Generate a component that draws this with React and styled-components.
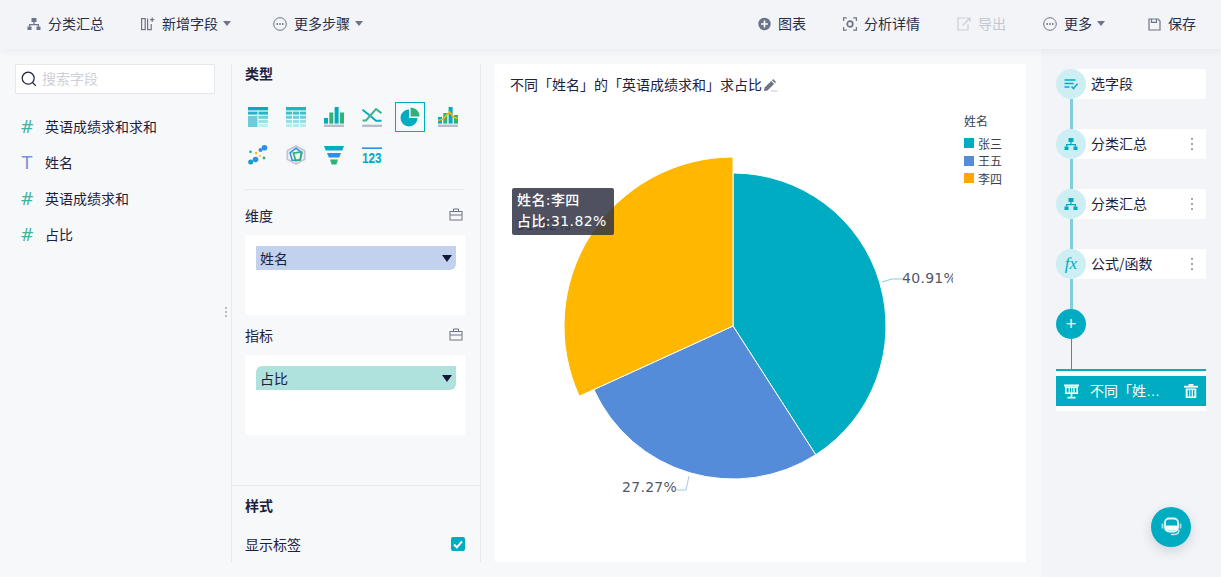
import styled, { createGlobalStyle } from 'styled-components';

const TEAL = '#00acc1';
const BLUE = '#548cd9';
const YELLOW = '#ffb700';
const GREEN = '#2db37a';
const GREY = '#b7bcca';

const GlobalStyle = createGlobalStyle`
	html, body {
		margin: 0;
		padding: 0;
		height: 100%;
		overflow: hidden;
		background: #f7f8fa;
	}
	body {
		font-family: "Noto Sans CJK SC", "Liberation Sans", sans-serif;
		font-size: 14px;
		color: #1d2140;
	}
	* {
		box-sizing: border-box;
	}
`;

/* header icons */
const TreeIcon = ({ color = '#6d7488' }) => (
	<svg width="14" height="14" viewBox="0 0 14 14" fill={color}>
		<rect x="4.5" y="1" width="5" height="4" />
		<rect x="0.5" y="9.5" width="4" height="3.5" />
		<rect x="9.5" y="9.5" width="4" height="3.5" />
		<path d="M6.4 5h1.2v2H12v2.5h-1.2V8.2H3.2v1.3H2V7h4.4z" />
	</svg>
);

const AddFieldIcon = () => (
	<svg width="14" height="14" viewBox="0 0 14 14" fill="none" stroke="#6d7488" strokeWidth="1.2">
		<rect x="0.6" y="1.6" width="3.6" height="11" />
		<path d="M6.6 1.6v11h3.6V7" />
		<path d="M11.2 0.5v4.4M9 2.7h4.4" />
	</svg>
);

const MoreIcon = () => (
	<svg width="14" height="14" viewBox="0 0 14 14" fill="none">
		<circle cx="7" cy="7" r="6.3" stroke="#6d7488" strokeWidth="1" />
		<circle cx="4.2" cy="7" r="0.9" fill="#6d7488" />
		<circle cx="7" cy="7" r="0.9" fill="#6d7488" />
		<circle cx="9.8" cy="7" r="0.9" fill="#6d7488" />
	</svg>
);

const PlusCircleIcon = () => (
	<svg width="13" height="14" viewBox="0 0 13 14">
		<circle cx="6.5" cy="7" r="6.2" fill="#6d7488" />
		<path d="M6.5 3.6v6.8M3.1 7h6.8" stroke="#fff" strokeWidth="1.6" />
	</svg>
);

const ScanIcon = () => (
	<svg width="14" height="14" viewBox="0 0 14 14" fill="none" stroke="#6d7488" strokeWidth="1.2">
		<path d="M0.6 4V0.8h3.2M10.2 0.8h3.2V4M13.4 10v3.2h-3.2M3.8 13.2H0.6V10" />
		<circle cx="7" cy="7" r="2.8" strokeWidth="1.7" />
	</svg>
);

const ExportIcon = () => (
	<svg width="14" height="14" viewBox="0 0 14 14" fill="none" stroke="#c9cdd8" strokeWidth="1.2">
		<path d="M11 7v6H1V1h7" />
		<path d="M5.5 8.5L12.5 1.5M9 1h4v4" />
	</svg>
);

const SaveIcon = () => (
	<svg width="13" height="13" viewBox="0 0 13 13" fill="none" stroke="#6d7488" strokeWidth="1.2">
		<path d="M1 1h9l2 2v9H1z" />
		<path d="M3.5 1v3.4h5V1" />
	</svg>
);

const ToolboxIcon = () => (
	<svg width="14" height="13" viewBox="0 0 14 13" fill="none" stroke="#6d7488" strokeWidth="1">
		<rect x="1" y="3.5" width="12" height="8.5" />
		<path d="M4.5 3.5V1h5v2.5M1 7h12" />
	</svg>
);

const SelectFieldIcon = () => (
	<svg width="14" height="11" viewBox="0 0 14 11" fill="none" stroke={TEAL} strokeWidth="1.4">
		<path d="M0.5 1h11M0.5 4.5h9M0.5 8h5" />
		<path d="M7.5 7.5l2 2.2 4-5" />
	</svg>
);

const BoardIcon = () => (
	<svg width="15" height="15" viewBox="0 0 15 15" fill="#fff">
		<rect x="0" y="0.5" width="15" height="2" />
		<path d="M1 2.5h13v7.5H1zM2.6 4v4.5h2V4zm3.2 0v4.5h1.2V4zm2.4 0v4.5h1.2V4zm2.4 0v4.5h1.8V4z" fillRule="evenodd" />
		<rect x="6.7" y="10" width="1.6" height="3" />
		<rect x="3.5" y="12.8" width="8" height="1.7" />
	</svg>
);

const TrashIcon = () => (
	<svg width="14" height="14" viewBox="0 0 14 14" fill="#fff">
		<rect x="0" y="1.8" width="14" height="1.8" />
		<rect x="4.5" y="0" width="5" height="1.8" />
		<path d="M1.7 4.6h10.6V14H1.7zM3.6 5.8v6.6h1.5V5.8zm2.6 0v6.6h1.5V5.8zm2.7 0v6.6h1.5V5.8z" fillRule="evenodd" />
	</svg>
);

const PenIcon = () => (
	<svg width="15" height="14" viewBox="0 0 15 14">
		<path d="M1 13l.6-3.4 6.6-6.6 2.9 2.9-6.6 6.6z" fill="#6d7488" />
		<path d="M9 2.2l1.2-1.2 2.9 2.9-1.2 1.2z" fill="#6d7488" />
		<path d="M8 13h6.5" stroke="#c9cdd8" strokeWidth="1.2" />
	</svg>
);

const HeadsetIcon = () => (
	<svg width="21" height="20" viewBox="0 0 21 20" fill="none">
		<rect x="4" y="1.5" width="13" height="13" rx="4" stroke="#e6f8fa" strokeWidth="1.8" />
		<rect x="4.5" y="8.5" width="12" height="5" rx="1.5" fill="#fff" />
		<path d="M1.5 6.5v5M19.5 6.5v5" stroke="#a8e2e9" strokeWidth="1.8" />
		<path d="M18 13c0 3-2 4.5-5 4.5H10" stroke="#c6eef2" strokeWidth="1.4" />
	</svg>
);

/* chart type icons, 20x20 */
const TableIcon = () => (
	<svg width="20" height="20" viewBox="0 0 20 20">
		<rect width="20" height="3.4" fill={TEAL} />
		<rect y="4.6" width="9.5" height="3" fill="#22b5c8" />
		<rect x="10.5" y="4.6" width="9.5" height="3" fill="#22b5c8" />
		<rect y="8.8" width="9.5" height="11.2" fill="#6bcdd9" />
		<rect x="10.5" y="8.8" width="9.5" height="3" fill="#6bcdd9" />
		<rect x="10.5" y="13" width="9.5" height="3" fill="#9ee0e8" />
		<rect x="10.5" y="17" width="9.5" height="3" fill="#c4edf1" />
	</svg>
);

const PivotIcon = () => (
	<svg width="20" height="20" viewBox="0 0 20 20">
		<rect width="20" height="3.4" fill="#22b5c8" />
		{[
			[4.6, '#3fbecf'],
			[8.8, '#6bcdd9'],
			[13, '#96dde6'],
			[17, '#b6e8ee'],
		].map(([y, fill]) =>
			[0, 7, 14].map((x) => <rect key={`${x}-${y}`} x={x} y={y} width="6" height="3" fill={fill} />)
		)}
	</svg>
);

const BarIcon = () => (
	<svg width="20" height="20" viewBox="0 0 20 20">
		<rect y="17.6" width="20" height="2.4" fill={GREY} />
		<rect y="11" width="4" height="5.6" fill={TEAL} />
		<rect x="5.3" y="5.5" width="4" height="11.1" fill={GREEN} />
		<rect x="10.6" y="0" width="4" height="16.6" fill={TEAL} />
		<rect x="16" y="5.5" width="4" height="11.1" fill={GREEN} />
	</svg>
);

const CrossIcon = () => (
	<svg width="20" height="20" viewBox="0 0 20 20" fill="none" strokeWidth="2">
		<rect y="17.6" width="20" height="2.4" fill={GREY} />
		<path d="M0.5 2.7L9 9.5l5 4.2h5.5" stroke={TEAL} />
		<path d="M0.5 13.5h3.5L14 2.2l5.5 4" stroke="#3cb68a" />
	</svg>
);

const PieIcon = () => (
	<svg width="20" height="20" viewBox="0 0 20 20">
		<path d="M9 2.5v8.5h8.5A8.5 8.5 0 1 1 9 2.5z" fill={TEAL} />
		<path d="M10.6 0.5A8.8 8.8 0 0 1 19.5 9.4h-8.9z" fill={GREEN} />
	</svg>
);

const ComboIcon = () => (
	<svg width="20" height="20" viewBox="0 0 20 20" fill="none">
		<rect y="17.6" width="20" height="2.4" fill={GREY} />
		<rect y="10" width="4" height="6.6" fill={TEAL} />
		<rect x="5.3" y="6" width="4" height="10.6" fill={GREEN} />
		<rect x="10.6" y="0" width="4" height="16.6" fill={TEAL} />
		<rect x="16" y="8" width="4" height="8.6" fill={GREEN} />
		<path d="M0 13.5l5-1.5 6.5-7 4 5 4 1.5" stroke={YELLOW} strokeWidth="1.6" />
	</svg>
);

const ScatterIcon = () => (
	<svg width="20" height="20" viewBox="0 0 20 20">
		<circle cx="16.5" cy="2.8" r="2.8" fill="#2f8fe8" />
		<circle cx="12.5" cy="5" r="2" fill="#2f8fe8" />
		<circle cx="7.5" cy="14.5" r="2.8" fill="#2f8fe8" />
		<circle cx="2.7" cy="17" r="2.5" fill="#0f9fd0" />
		<circle cx="2.5" cy="6.8" r="1.4" fill={GREEN} />
		<circle cx="16" cy="13" r="1.4" fill={GREEN} />
		<circle cx="8" cy="8" r="1.2" fill={YELLOW} />
		<circle cx="12" cy="11" r="1" fill={YELLOW} />
	</svg>
);

const RadarIcon = () => (
	<svg width="20" height="20" viewBox="0 0 20 20" fill="none">
		<path d="M10 1l8.7 4.8v8.4L10 19l-8.7-4.8V5.8z" fill="#f1f2f6" stroke="#c2c7d3" strokeWidth="1.8" />
		<path d="M10 3.2l6 4.6-2.2 7.4H6.2L4 7.8z" stroke="#2f8fe8" strokeWidth="1.5" />
		<path d="M7.4 8.2l8-1.2-1 7.6-4.6 1.2z" stroke={GREEN} strokeWidth="1.7" />
	</svg>
);

const FunnelIcon = () => (
	<svg width="20" height="20" viewBox="0 0 20 20">
		<path d="M0 1h20l-1.8 4.6H1.8z" fill={TEAL} />
		<path d="M3 8h14l-1.8 4.4H4.8z" fill="#2f8fe8" />
		<path d="M6 14.6h8L12.4 19.4H7.6z" fill={GREEN} />
	</svg>
);

const NumberIcon = () => (
	<svg width="20" height="20" viewBox="0 0 20 20">
		<rect y="2.4" width="20" height="1.6" fill="#2f8fe8" />
		<text x="0" y="18" fontFamily="Liberation Sans, sans-serif" fontSize="15" fontWeight="700" fill={TEAL} textLength="19.6" lengthAdjust="spacingAndGlyphs">
			123
		</text>
	</svg>
);

const CHART_TYPES = [
	{ id: 'table', Icon: TableIcon },
	{ id: 'pivot', Icon: PivotIcon },
	{ id: 'bar', Icon: BarIcon },
	{ id: 'cross', Icon: CrossIcon },
	{ id: 'pie', Icon: PieIcon, active: true },
	{ id: 'combo', Icon: ComboIcon },
	{ id: 'scatter', Icon: ScatterIcon },
	{ id: 'radar', Icon: RadarIcon },
	{ id: 'funnel', Icon: FunnelIcon },
	{ id: 'number', Icon: NumberIcon },
];

const FIELDS = [
	{ name: '英语成绩求和求和', type: 'num' },
	{ name: '姓名', type: 'text' },
	{ name: '英语成绩求和', type: 'num' },
	{ name: '占比', type: 'num' },
];

const CX = 238;
const CY = 220;

const SLICES = [
	{ name: '张三', from: 0, to: 147.27, r: 153, color: TEAL },
	{ name: '王五', from: 147.27, to: 245.45, r: 153, color: BLUE },
	{ name: '李四', from: 245.45, to: 360, r: 169, color: YELLOW },
];

const slicePath = ({ from, to, r }) => {
	const point = (deg) => {
		const rad = (deg * Math.PI) / 180;
		return `${(CX + r * Math.sin(rad)).toFixed(2)} ${(CY - r * Math.cos(rad)).toFixed(2)}`;
	};
	const large = to - from > 180 ? 1 : 0;
	return `M${CX} ${CY}L${point(from)}A${r} ${r} 0 ${large} 1 ${point(to)}Z`;
};

const App = () => {
	return (
		<Page>
			<GlobalStyle />
			<Header>
				<ToolGroup>
					<Tool>
						<TreeIcon />
						<ToolLabel>分类汇总</ToolLabel>
					</Tool>
					<Tool $caret>
						<AddFieldIcon />
						<ToolLabel>新增字段</ToolLabel>
					</Tool>
					<Tool $caret>
						<MoreIcon />
						<ToolLabel>更多步骤</ToolLabel>
					</Tool>
				</ToolGroup>
				<ToolGroup>
					<Tool>
						<PlusCircleIcon />
						<ToolLabel>图表</ToolLabel>
					</Tool>
					<Tool>
						<ScanIcon />
						<ToolLabel>分析详情</ToolLabel>
					</Tool>
					<Tool $disabled>
						<ExportIcon />
						<ToolLabel>导出</ToolLabel>
					</Tool>
					<Tool $caret>
						<MoreIcon />
						<ToolLabel>更多</ToolLabel>
					</Tool>
					<SaveTool>
						<SaveIcon />
						<ToolLabel>保存</ToolLabel>
					</SaveTool>
				</ToolGroup>
			</Header>

			<Body>
				<FieldColumn>
					<Search>
						<svg width="16" height="16" viewBox="0 0 16 16" fill="none" stroke="#1d2140" strokeWidth="1.2">
							<circle cx="7.2" cy="7.2" r="6" />
							<path d="M11.5 11.5l3.4 3.4" />
						</svg>
						<span>搜索字段</span>
					</Search>
					<FieldList>
						{FIELDS.map((field) => (
							<Field key={field.name}>
								<FieldMark $type={field.type}>{field.type === 'num' ? '#' : 'T'}</FieldMark>
								{field.name}
							</Field>
						))}
					</FieldList>
					<ResizeDots />
				</FieldColumn>

				<ConfigColumn>
					<ConfigMain>
						<SectionTitle>类型</SectionTitle>
						<TypeGrid>
							{CHART_TYPES.map(({ id, Icon, active }) => (
								<TypeCell key={id} $active={active}>
									<Icon />
								</TypeCell>
							))}
						</TypeGrid>
						<Divider />
						<DropHead $first>
							维度
							<ToolboxIcon />
						</DropHead>
						<DropBox>
							<Pill $bg="#c2d1ee" $radius="0 0 6px 0">
								<PillLabel>姓名</PillLabel>
								<PillCaret />
							</Pill>
						</DropBox>
						<DropHead>
							指标
							<ToolboxIcon />
						</DropHead>
						<DropBox>
							<Pill $bg="#b0e2dd" $radius="6px 0 6px 0">
								<PillLabel>占比</PillLabel>
								<PillCaret />
							</Pill>
						</DropBox>
					</ConfigMain>
					<StyleSection>
						<SectionTitle>样式</SectionTitle>
						<OptionRow>
							显示标签
							<CheckBox>
								<svg width="10" height="9" viewBox="0 0 10 9" fill="none" stroke="#fff" strokeWidth="2">
									<path d="M1 4.5l2.8 2.8L9 1.5" />
								</svg>
							</CheckBox>
						</OptionRow>
					</StyleSection>
				</ConfigColumn>

				<ChartPanel>
					<ChartTitle>
						不同「姓名」的「英语成绩求和」求占比
						<PenIcon />
					</ChartTitle>
					<ChartBody>
						<svg width="458" height="456" viewBox="0 0 458 456">
							{SLICES.map((slice) => (
								<path key={slice.name} d={slicePath(slice)} fill={slice.color} stroke="#fff" strokeWidth="1" />
							))}
							<path d="M387 176l10-3h10" fill="none" stroke="#7fd3dd" strokeWidth="1" />
							<path d="M194 370l-3 14h-9" fill="none" stroke="#a9c4ea" strokeWidth="1" />
							<path d="M75 119l20 7" fill="none" stroke="#f0c860" strokeWidth="1" />
							<PieLabel x="407" y="177">40.91%</PieLabel>
							<PieLabel x="127" y="386">27.27%</PieLabel>
							<PieLabel x="21" y="124">31.82%</PieLabel>
						</svg>
						<Legend>
							<LegendTitle>姓名</LegendTitle>
							{SLICES.map((slice, index) => (
								<LegendItem key={slice.name}>
									<LegendSwatch $color={index === 2 ? '#ffa600' : slice.color} />
									{slice.name}
								</LegendItem>
							))}
						</Legend>
						<Tooltip>
							<div>姓名:李四</div>
							<div>占比:31.82%</div>
						</Tooltip>
					</ChartBody>
				</ChartPanel>

				<StepColumn>
					<StepNode>
						<StepCircle>
							<SelectFieldIcon />
						</StepCircle>
						<StepCard>选字段</StepCard>
					</StepNode>
					<Connector />
					<StepNode>
						<StepCircle>
							<TreeIcon color={TEAL} />
						</StepCircle>
						<StepCard>
							分类汇总
							<Kebab />
						</StepCard>
					</StepNode>
					<Connector />
					<StepNode>
						<StepCircle>
							<TreeIcon color={TEAL} />
						</StepCircle>
						<StepCard>
							分类汇总
							<Kebab />
						</StepCard>
					</StepNode>
					<Connector />
					<StepNode>
						<StepCircle>
							<FxMark>fx</FxMark>
						</StepCircle>
						<StepCard>
							公式/函数
							<Kebab />
						</StepCard>
					</StepNode>
					<Connector />
					<AddStep>+</AddStep>
					<Connector $thin />
					<ResultCard>
						<ResultBar>
							<BoardIcon />
							<ResultName>不同「姓名」的「英语成绩求和」求占比</ResultName>
							<TrashIcon />
						</ResultBar>
					</ResultCard>
					<ChatButton>
						<HeadsetIcon />
					</ChatButton>
				</StepColumn>
			</Body>
		</Page>
	);
};

const Page = styled.div`
	width: 1221px;
	height: 577px;
	display: flex;
	flex-direction: column;
	background: #f7f8fa;
	overflow: hidden;
`;

const Header = styled.header`
	height: 49px;
	flex: none;
	display: flex;
	align-items: center;
	justify-content: space-between;
	padding: 0 25px 1px 27px;
	background: #f2f4f8;
	box-shadow: 0 2px 8px rgba(30, 40, 70, 0.06);
	position: relative;
	z-index: 2;
`;

const ToolGroup = styled.div`
	display: flex;
	align-items: center;
	gap: 37px;
`;

const Tool = styled.div`
	display: flex;
	align-items: center;
	gap: 7px;
	line-height: 20px;
	color: ${(p) => (p.$disabled ? '#c3c7d2' : '#2a2e48')};
	padding-right: ${(p) => (p.$caret ? '18px' : '0')};
	position: relative;

	&::after {
		content: '';
		display: ${(p) => (p.$caret ? 'block' : 'none')};
		position: absolute;
		right: 5px;
		top: 7px;
		border: 4.5px solid transparent;
		border-bottom-width: 0;
		border-top: 5px solid #6d7488;
	}
`;

const SaveTool = styled(Tool)`
	margin-left: 1px;
`;

const ToolLabel = styled.span`
	padding-bottom: 2px;
	line-height: 18px;
`;

const Body = styled.main`
	flex: 1;
	min-height: 0;
	display: flex;
`;

const FieldColumn = styled.aside`
	width: 231px;
	flex: none;
	padding: 15px 16px 0 15px;
	position: relative;
`;

const Search = styled.div`
	height: 30px;
	display: flex;
	align-items: center;
	gap: 5px;
	padding: 0 5px;
	background: #fff;
	border: 1px solid #e6e8ee;
	border-radius: 1px;
	color: #cdd0d9;

	span {
		padding-bottom: 2px;
	}
`;

const FieldList = styled.ul`
	list-style: none;
	margin: 14px 0 0;
	padding: 0;
`;

const Field = styled.li`
	height: 36px;
	display: flex;
	align-items: center;
	gap: 11px;
	padding-left: 5px;
	color: #1d2140;
`;

const FieldMark = styled.span`
	width: 14px;
	padding-top: 2px;
	text-align: center;
	font-family: 'DejaVu Sans', sans-serif;
	font-size: 17px;
	color: ${(p) => (p.$type === 'num' ? '#3fb39f' : '#7a8fe0')};
`;

const ResizeDots = styled.i`
	position: absolute;
	left: 225px;
	top: 258px;
	width: 2px;
	height: 2px;
	background: #b9bdc9;
	box-shadow: 0 4px 0 #b9bdc9, 0 8px 0 #b9bdc9;
`;

const ConfigColumn = styled.section`
	width: 250px;
	flex: none;
	margin: 15px 0;
	display: flex;
	flex-direction: column;
	border-left: 1px solid #e8eaee;
	border-right: 1px solid #e8eaee;
`;

const ConfigMain = styled.div`
	flex: 1;
	padding: 0 15px 0 13px;
`;

const SectionTitle = styled.h4`
	margin: 0;
	padding-bottom: 2px;
	font-size: 14px;
	font-weight: 700;
	line-height: 18px;
`;

const TypeGrid = styled.div`
	display: grid;
	grid-template-columns: repeat(6, 30px);
	gap: 8px;
	margin: 18px 0 0 -2px;
`;

const TypeCell = styled.div`
	width: 30px;
	height: 30px;
	display: flex;
	align-items: center;
	justify-content: center;
	border: 1px solid ${(p) => (p.$active ? TEAL : 'transparent')};

	svg {
		display: block;
	}
`;

const Divider = styled.hr`
	height: 1px;
	border: 0;
	margin: 19px 0 0;
	background: #e8eaee;
`;

const DropHead = styled.div`
	height: ${(p) => (p.$first ? '45px' : '40px')};
	display: flex;
	align-items: center;
	justify-content: space-between;
	padding: ${(p) => (p.$first ? '4px 2px 0 0' : '0 2px 1px 0')};
`;

const DropBox = styled.div`
	height: 80px;
	padding: 11px 9px 0 11px;
	background: #fff;
`;

const Pill = styled.div`
	height: 24px;
	display: flex;
	align-items: center;
	justify-content: space-between;
	padding-right: 4px;
	background: ${(p) => p.$bg};
	border-radius: ${(p) => p.$radius};
`;

const PillLabel = styled.span`
	padding: 0 0 1px 4px;
`;

const PillCaret = styled.i`
	width: 0;
	height: 0;
	border: 5.5px solid transparent;
	border-bottom-width: 0;
	border-top: 7px solid #14193a;
`;

const StyleSection = styled.div`
	flex: none;
	height: 77px;
	padding: 10px 15px 0 13px;
	border-top: 1px solid #e8eaee;
`;

const OptionRow = styled.div`
	display: flex;
	align-items: center;
	justify-content: space-between;
	margin-top: 18px;
	line-height: 20px;
`;

const CheckBox = styled.span`
	width: 14px;
	height: 14px;
	display: flex;
	align-items: center;
	justify-content: center;
	background: ${TEAL};
	border-radius: 2px;
`;

const ChartPanel = styled.section`
	width: 531px;
	flex: none;
	margin: 15px 15px 15px 14px;
	background: #fff;
`;

const ChartTitle = styled.div`
	height: 42px;
	display: flex;
	align-items: center;
	padding: 0 0 2px 15px;

	svg {
		margin: 2px 0 0 1px;
	}
`;

const ChartBody = styled.div`
	position: relative;
	height: 456px;

	svg {
		display: block;
	}
`;

const PieLabel = styled.text`
	font-family: 'DejaVu Sans', sans-serif;
	font-size: 14px;
	letter-spacing: 0.3px;
	fill: #51566a;
`;

const Legend = styled.div`
	position: absolute;
	left: 469px;
	top: 6px;
	font-size: 12px;
	line-height: 17.5px;
	color: #3c3f4c;
`;

const LegendTitle = styled.div`
	margin-bottom: 5px;
`;

const LegendItem = styled.div`
	display: flex;
	align-items: center;
	gap: 4px;
`;

const LegendSwatch = styled.i`
	width: 10px;
	height: 10px;
	background: ${(p) => p.$color};
`;

const Tooltip = styled.div`
	position: absolute;
	left: 17px;
	top: 82px;
	width: 102px;
	height: 47px;
	padding: 2px 5px;
	background: rgba(50, 52, 70, 0.86);
	border-radius: 2px;
	color: #fff;
	font-family: 'DejaVu Sans', 'Noto Sans CJK SC', sans-serif;
	font-size: 14px;
	font-weight: 500;
	letter-spacing: 0.4px;
	line-height: 21px;
	white-space: nowrap;
`;

const StepColumn = styled.aside`
	width: 180px;
	flex: none;
	padding: 20px 15px 0;
	background: #f2f4f8;
	position: relative;
`;

const StepNode = styled.div`
	height: 30px;
	display: flex;
`;

const StepCircle = styled.div`
	width: 30px;
	height: 30px;
	flex: none;
	display: flex;
	align-items: center;
	justify-content: center;
	background: #cdeef2;
	border-radius: 50%;
	position: relative;
	z-index: 1;
`;

const StepCard = styled.div`
	flex: 1;
	margin-left: -15px;
	padding: 0 13px 2px 20px;
	display: flex;
	align-items: center;
	justify-content: space-between;
	background: #fff;
	border-radius: 2px;
`;

const Kebab = styled.i`
	width: 2px;
	height: 2px;
	margin: 0 0 8px;
	background: #b49fb5;
	box-shadow: 0 5px 0 #b49fb5, 0 10px 0 #b49fb5;
`;

const FxMark = styled.span`
	font-family: 'Liberation Serif', serif;
	font-style: italic;
	font-size: 17px;
	color: ${TEAL};
`;

const Connector = styled.div`
	width: ${(p) => (p.$thin ? '1px' : '3px')};
	height: 30px;
	margin-left: ${(p) => (p.$thin ? '15px' : '14px')};
	background: ${(p) => (p.$thin ? '#1d9fb2' : '#7fd0dc')};
`;

const AddStep = styled.div`
	width: 30px;
	height: 30px;
	display: flex;
	align-items: center;
	justify-content: center;
	background: ${TEAL};
	border-radius: 50%;
	color: #fff;
	font-family: 'Liberation Sans', sans-serif;
	font-size: 18px;
`;

const ResultCard = styled.div`
	padding: 5px 0;
	background: #fff;
	border-top: 2px solid ${TEAL};
`;

const ResultBar = styled.div`
	height: 30px;
	display: flex;
	align-items: center;
	gap: 11px;
	padding: 0 8px;
	background: ${TEAL};
	color: #fff;
`;

const ResultName = styled.span`
	width: 71px;
	margin-right: auto;
	padding-bottom: 2px;
	font-family: 'Liberation Sans', 'Noto Sans CJK SC', sans-serif;
	white-space: nowrap;
	overflow: hidden;
	text-overflow: ellipsis;
`;

const ChatButton = styled.div`
	position: absolute;
	left: 110px;
	top: 458px;
	width: 40px;
	height: 40px;
	display: flex;
	align-items: center;
	justify-content: center;
	background: ${TEAL};
	border-radius: 50%;
	box-shadow: 0 4px 12px rgba(30, 40, 70, 0.16);
`;

export default App;
